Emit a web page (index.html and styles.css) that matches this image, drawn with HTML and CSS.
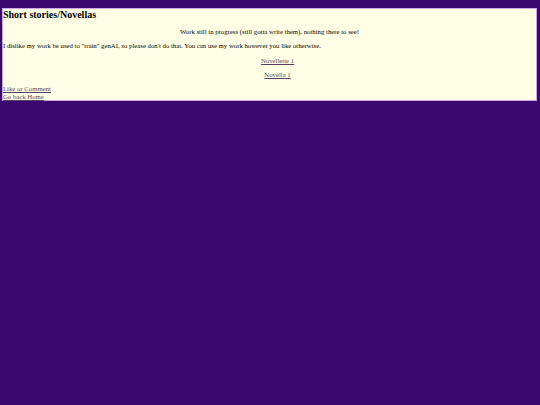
FILE: index.html
```html
<!DOCTYPE html>
<html lang="en">
<head>
<meta charset="utf-8">
<title>Short stories/Novellas</title>
<link rel="stylesheet" href="styles.css">
</head>
<body>
<main class="page">
  <h1 class="title">Short stories/Novellas</h1>
  <p class="center">Work still in progress (still gotta write them), nothing there to see!</p>
  <p>I dislike my work be used to "train" genAI, so please don't do that. You can use my work however you like otherwise.</p>
  <ul class="stories">
    <li><a href="#">Novellette 1</a></li>
    <li><a href="#">Novella 1</a></li>
  </ul>
  <div class="footer">
    <a href="#">Like or Comment</a>
    <a href="#">Go back Home</a>
  </div>
</main>
</body>
</html>
```

FILE: styles.css
```css
html, body {
  margin: 0;
  padding: 0;
}
body {
  background: #3a0870;
  padding: 8px 3px 0 2px;
  font-family: "Liberation Serif", "Times New Roman", serif;
  font-size: 6.75px;
  line-height: 7.6px;
  color: #000;
}
.page {
  background: #ffffe6;
  border: 1px solid #cfa6e0;
}
.title {
  font-size: 10px;
  line-height: 11.5px;
  font-weight: bold;
  margin: 0 0 7.6px 0;
}
.page p {
  margin: 0 0 6.8px 0;
}
.center {
  text-align: center;
}
.stories {
  list-style: none;
  margin: 0 0 6.6px 0;
  padding: 0 0 0 16px;
  text-align: center;
  display: flex;
  flex-direction: column;
  gap: 6.4px;
}
a {
  color: #5e3f63;
  text-decoration: underline;
}
.footer {
  display: flex;
  flex-direction: column;
  align-items: flex-start;
}
```
